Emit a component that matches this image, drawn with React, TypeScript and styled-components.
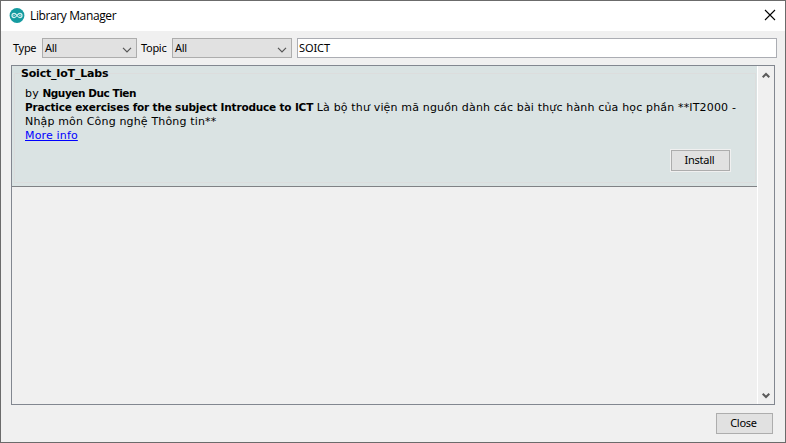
import React from "react";
import styled, { createGlobalStyle } from "styled-components";

const GlobalStyle = createGlobalStyle`
  * { box-sizing: border-box; }
  body { margin: 0; background: #f0f0f0; overflow: hidden; }
`;

const Window = styled.div`
  width: 786px;
  height: 443px;
  display: flex;
  flex-direction: column;
  border: 1px solid #6b6b6b;
  background: #f0f0f0;
  color: #000;
  font: 11px/14px "Noto Sans", sans-serif;
  letter-spacing: -0.3px;
`;

const TitleBar = styled.header`
  height: 30px;
  flex: none;
  display: flex;
  align-items: center;
  padding: 0 9px 0 8px;
  background: #fff;
`;

const Title = styled.h1`
  flex: 1;
  margin: 0 0 0 5px;
  font: 400 12px/16px "Open Sans", sans-serif;
  letter-spacing: -0.38px;
`;

const CloseIcon = styled.button`
  display: flex;
  padding: 0 0 2px;
  border: 0;
  background: none;
`;

const Filters = styled.div`
  height: 34px;
  flex: none;
  display: flex;
  align-items: center;
  padding: 0 8px 0 12px;
`;

const Label = styled.label<{ $width: number }>`
  width: ${(p) => p.$width}px;
  white-space: nowrap;
`;

const Select = styled.div<{ $width: number }>`
  width: ${(p) => p.$width}px;
  height: 20px;
  display: flex;
  align-items: center;
  justify-content: space-between;
  padding: 0 4px 0 2px;
  border: 1px solid #adadad;
  background: #e1e1e1;
`;

const SelectArrow = styled.svg`
  margin-top: 3px;
`;

const TopicLabel = styled(Label)`
  margin-left: 4px;
`;

const Search = styled.input`
  flex: 1;
  min-width: 0;
  height: 20px;
  margin-left: 5px;
  padding: 0 1px 2px;
  border: 1px solid #abadb3;
  background: #fff;
  color: #000;
  font: inherit;
  letter-spacing: -0.1px;
  outline: none;
`;

const List = styled.main`
  height: 340px;
  flex: none;
  display: flex;
  margin: 0 10px;
  border: 1px solid #828790;
`;

const Items = styled.div`
  flex: 1;
  min-width: 0;
`;

const Item = styled.article`
  height: 121px;
  padding: 1px 1px 3px 2px;
  border-bottom: 1px solid #808285;
  background: #dae3e3;
`;

const Group = styled.fieldset`
  height: 116px;
  min-width: 0;
  display: flex;
  flex-direction: column;
  margin: 0;
  padding: 0 25px 10px 10px;
  border: 1px solid #dcdddd;
`;

const Legend = styled.legend`
  margin-left: -4px;
  padding: 0;
  font: 700 11px/13px "DejaVu Sans", sans-serif;
  letter-spacing: -0.2px;
`;

const Description = styled.div`
  padding-top: 7px;
  font: 11px/14px "DejaVu Sans", sans-serif;
  letter-spacing: 0.16px;
  white-space: nowrap;
`;

const Line = styled.div`
  height: 14px;
`;

const Strong = styled.b`
  font-size: 10.5px;
  line-height: 0;
  letter-spacing: -0.18px;
`;

const Author = styled(Strong)`
  letter-spacing: -0.45px;
`;

const Link = styled.a`
  color: #00f;
  text-decoration: underline;
`;

const Button = styled.button<{ $width: number }>`
  width: ${(p) => p.$width}px;
  height: 21px;
  padding: 0 2px 2px 0;
  border: 1px solid #adadad;
  background: #e1e1e1;
  color: #000;
  font: 11px/14px "Noto Sans", sans-serif;
  letter-spacing: -0.25px;
`;

const InstallButton = styled(Button)`
  align-self: flex-end;
  margin-top: 7px;
  box-shadow: 0 0 0 1px #f0f0f0;
`;

const ScrollBar = styled.div`
  width: 17px;
  flex: none;
  display: flex;
  flex-direction: column;
  align-items: center;
  justify-content: space-between;
  padding: 6px 0 5px;
  border-left: 1px solid #fff;
`;

const Footer = styled.footer`
  display: flex;
  justify-content: flex-end;
  padding: 8px 12px 0;
`;

const Logo = () => (
  <svg width="16" height="16" viewBox="0 0 16 16" fill="none">
    <circle cx="8" cy="7.5" r="7.4" fill="#159ba0" />
    <path d="M8 7.5C6.8 5.9 6.2 5.4 5.1 5.4a2.1 2.1 0 0 0 0 4.2C6.2 9.6 6.8 9.1 8 7.5s1.8-2.1 2.9-2.1a2.1 2.1 0 0 1 0 4.2C9.8 9.6 9.2 9.1 8 7.5Z" stroke="#d5f0f0" strokeWidth="1.2" />
    <path d="M4.3 7.5h1.6M10.1 7.5h1.6M10.9 6.7v1.6" stroke="#d5f0f0" strokeWidth=".6" />
  </svg>
);

const Arrow = () => (
  <SelectArrow width="10" height="6" viewBox="0 0 10 6" fill="none">
    <path d="m1 .8 4 4 4-4" stroke="#555" strokeWidth="1.2" />
  </SelectArrow>
);

const ScrollArrow = ({ down }: { down?: boolean }) => (
  <svg width="8" height="7" viewBox="0 0 8 7" fill="none">
    <path d={down ? "m.7 1.7 3.3 3.3 3.3-3.3" : "M.7 5.3 4 2l3.3 3.3"} stroke="#5a5a5a" strokeWidth="2" />
  </svg>
);

export default function App() {
  return (
    <Window>
      <GlobalStyle />
      <TitleBar>
        <Logo />
        <Title>Library Manager</Title>
        <CloseIcon aria-label="Close window">
          <svg width="12" height="12" viewBox="0 0 12 12" fill="none">
            <path d="m1 1 10 10M11 1 1 11" stroke="#000" strokeWidth="1.1" />
          </svg>
        </CloseIcon>
      </TitleBar>
      <Filters>
        <Label $width={29}>Type</Label>
        <Select $width={95}>All<Arrow /></Select>
        <TopicLabel $width={31}>Topic</TopicLabel>
        <Select $width={120}>All<Arrow /></Select>
        <Search defaultValue="SOICT" />
      </Filters>
      <List>
        <Items>
          <Item>
            <Group>
              <Legend>Soict_IoT_Labs</Legend>
              <Description>
                <Line>by <Author>Nguyen Duc Tien</Author></Line>
                <Line>
                  <Strong>Practice exercises for the subject Introduce to ICT</Strong>{" "}
                  Là bộ thư viện mã nguồn dành các bài thực hành của học phần **IT2000 -
                </Line>
                <Line>Nhập môn Công nghệ Thông tin**</Line>
                <Line><Link>More info</Link></Line>
              </Description>
              <InstallButton $width={59}>Install</InstallButton>
            </Group>
          </Item>
        </Items>
        <ScrollBar>
          <ScrollArrow />
          <ScrollArrow down />
        </ScrollBar>
      </List>
      <Footer>
        <Button $width={57}>Close</Button>
      </Footer>
    </Window>
  );
}
